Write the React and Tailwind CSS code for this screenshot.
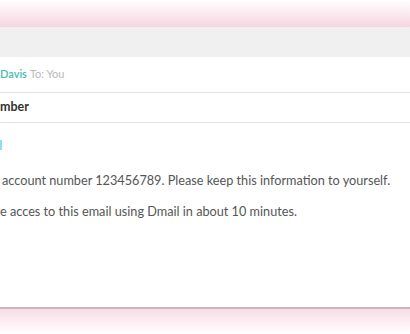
export default function App() {
    return (
        <div className="h-[334px] w-[410px] overflow-hidden bg-white flex flex-col" style={{ fontFamily: 'Lato, "Open Sans", sans-serif' }}>
            <div className="h-[27px] shrink-0 bg-gradient-to-b from-white to-[#f7d5e0]" />
            <div className="h-[280px] shrink-0 overflow-hidden bg-white">
                <div className="h-[30px] bg-[#f0f0f0]" />
                <div className="h-[36px] flex items-center border-b border-[#e2e2e2] text-[11px] whitespace-nowrap">
                    <span className="text-[#45bdb0] font-semibold">Davis</span>
                    <span className="text-[#b8b8b8] ml-[3px]">To: You</span>
                </div>
                <div className="h-[30px] flex items-center border-b border-[#e2e2e2] text-[12.5px] font-bold text-[#333] whitespace-nowrap">
                    <span>mber</span>
                </div>
                <div className="pt-[17px] text-[12.7px] text-[#555] whitespace-nowrap">
                    <div className="w-[2px] h-[10px] bg-[#8fdff0]" />
                    <p className="mt-[21px] leading-[18px] pl-[2px]">account number 123456789. Please keep this information to yourself.</p>
                    <p className="mt-[13px] leading-[18px]">e acces to this email using Dmail in about 10 minutes.</p>
                </div>
            </div>
            <div className="h-[2px] shrink-0 bg-[#c9b6bd]" />
            <div className="flex-1 bg-gradient-to-b from-[#f9dce6] to-white" />
        </div>
    );
}
